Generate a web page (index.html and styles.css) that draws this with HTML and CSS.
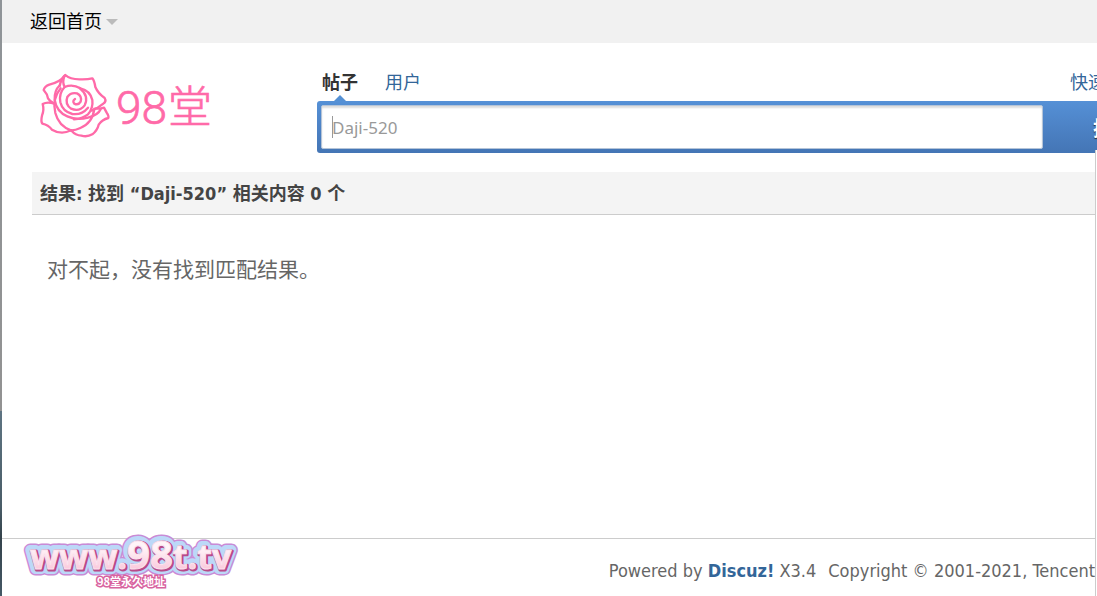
FILE: index.html
```html
<!DOCTYPE html>
<html lang="zh-CN">
<head>
  <meta charset="UTF-8">
  <meta name="viewport" content="width=device-width, initial-scale=1">
  <title>搜索 - 98堂</title>
  <link rel="stylesheet" href="styles.css">
</head>
<body>

<nav class="toptb">
  <a href="#" class="home">返回首页</a>
</nav>

<header class="header">
  <a href="#" class="logo">
    <svg width="190" height="76" viewBox="0 0 570 228" role="img" aria-label="98堂">
      <g fill="none" stroke="#ff6aa8" stroke-width="7" stroke-linecap="round" stroke-linejoin="round">
        <path d="M89 54 Q93 32 106 21 Q120 34 148 34 Q172 35 187 31 Q193 38 196 57 Q204 76 224 90 Q230 100 220 107 Q202 122 185 128"/>
        <path d="M104 24 Q90 42 58 50 Q44 55 41 66 Q52 78 54 91 Q60 101 73 107"/>
        <path d="M73 107 Q52 100 38 108 Q43 125 36 143 Q32 159 37 167 Q55 171 66 185 Q94 202 123 187"/>
        <path d="M123 187 Q137 203 154 203 Q172 208 187 199 Q202 187 206 170 Q216 155 235 150 Q237 144 230 134 L222 119 Q208 123 198 121"/>
        <path d="M92 61 Q66 92 76 135 Q86 174 123 187"/>
        <path d="M90 51 Q72 68 74 96 Q80 132 112 145 Q140 158 174 149 Q204 142 212 124"/>
        <path d="M103 25 Q96 42 104 57 Q128 47 151 61 Q181 68 187 96 Q190 120 174 139 Q157 152 132 154"/>
        <path d="M104 57 Q86 76 91 103 Q98 131 127 138 Q155 142 174 119"/>
        <path d="M149 60 Q178 84 164 112 Q148 133 123 122 Q104 108 112 87 Q122 72 141 76 Q157 84 152 101 Q145 113 133 107 Q126 99 135 93"/>
        <path d="M193 122 Q188 165 151 180 Q137 187 123 187"/>
      </g>
      <text x="258" y="167" class="logo-num">98</text>
      <text x="414" y="164" class="logo-cn">堂</text>
    </svg>
  </a>

  <form class="search">
    <div class="tabs">
      <a href="#" class="active">帖子</a>
      <a href="#">用户</a>
      <a href="#" class="quick">快速</a>
    </div>
    <div class="bar">
      <input type="text" placeholder="Daji-520" aria-label="搜索">
      <button type="submit">搜索</button>
    </div>
  </form>
</header>

<main class="results">
  <h2>结果: 找到 <span>“Daji-520”</span> 相关内容 0 个</h2>
  <p>对不起，没有找到匹配结果。</p>
</main>

<footer class="footer">
  <a href="#" class="site">
    <svg width="220" height="60" viewBox="0 0 220 60" role="img" aria-label="www.98t.tv 98堂永久地址">
      <defs>
        <linearGradient id="pink" x1="0" y1="0" x2="0" y2="1">
          <stop offset="0.4" stop-color="#fff4f8"/>
          <stop offset="0.9" stop-color="#f9bdd4"/>
        </linearGradient>
      </defs>
      <use href="#site-name" stroke="#c98bd6" stroke-width="13"/>
      <use href="#site-name" stroke="#bcd8f8" stroke-width="10"/>
      <use href="#site-name" x="1" y="1" stroke="#b84a8a" stroke-width="3"/>
      <g fill="url(#pink)" stroke="#fbe3ee" stroke-width="1">
        <text id="site-name" class="site-name" x="8" y="36">www.<tspan class="big">98</tspan>t.tv</text>
      </g>
      <text x="75" y="53" class="site-cn">98堂永久地址</text>
    </svg>
  </a>
  <p class="powered">Powered by <a href="#">Discuz!</a> X3.4</p>
  <p class="copyright">Copyright © 2001-2021, Tencent</p>
</footer>

<div class="edge"></div>

</body>
</html>
```
FILE: styles.css
```css
* {
  box-sizing: border-box;
}

body {
  position: relative;
  display: flex;
  flex-direction: column;
  min-height: 100vh;
  margin: 0;
  padding-left: 2px;
  overflow: hidden;
  background: linear-gradient(#8f9498 0, #929292 69%, #5e7482 69%, #4a5d68 85%, #34434c 90%, #455865 100%) left top / 2px 100% no-repeat #fff;
  color: #666;
  font-family: "DejaVu Sans Condensed", "Noto Sans CJK SC", sans-serif;
  font-size: 18px;
}

a {
  color: #336699;
  text-decoration: none;
}

.toptb {
  height: 43px;
  padding-left: 28px;
  background: #f1f1f1;
  line-height: 43px;
}

.home {
  display: inline-flex;
  align-items: center;
  gap: 4px;
  color: #000;
}

.home::after {
  content: "";
  border: 6px solid transparent;
  border-top-color: #bbb;
  border-bottom: 0;
}

.header {
  display: flex;
  height: 129px;
  padding-left: 28px;
}

.logo {
  flex: 0 0 287px;
  padding-top: 25px;
}

.logo svg {
  display: block;
}

.logo-num,
.logo-cn {
  fill: #ff6aa8;
  stroke: #ff6aa8;
  stroke-width: 2px;
  font-family: Roboto, sans-serif;
  font-size: 138px;
  font-weight: 300;
}

.logo-cn {
  font-family: "Noto Sans CJK SC", sans-serif;
  font-size: 132px;
}

.search {
  flex: 1;
  min-width: 0;
  padding-top: 20px;
}

.tabs {
  display: flex;
  gap: 27px;
  height: 38px;
  padding-left: 5px;
  line-height: 40px;
}

.tabs .active {
  position: relative;
  color: #333;
  font-weight: bold;
}

.tabs .active::after {
  content: "";
  position: absolute;
  bottom: 0;
  left: 12px;
  border: 6px solid transparent;
  border-bottom-color: #5590d3;
  border-top: 0;
}

.tabs .quick {
  width: 27px;
  margin-left: auto;
  overflow: hidden;
  white-space: nowrap;
}

.bar {
  display: flex;
  height: 52px;
  padding: 4px 0 4px 4px;
  border-radius: 3px 0 0 3px;
  background: linear-gradient(#5590d6, #4475b5);
}

.bar input {
  flex: 1;
  min-width: 0;
  padding: 0 10px;
  border: 1px solid #b4c4d8;
  border-radius: 2px;
  /* text cursor */
  background: linear-gradient(#999, #999) 10px 10px / 1px 22px no-repeat #fff;
  box-shadow: inset 0 2px 2px #ddd;
  font-family: "Noto Sans", sans-serif;
  font-size: 17px;
}

.bar input::placeholder {
  color: #999;
}

.bar button {
  flex: 0 0 54px;
  padding: 0 0 0 50px;
  border: 0;
  overflow: hidden;
  background: none;
  color: #fff;
  font: bold 20px "Noto Sans CJK SC", sans-serif;
  text-align: left;
  text-shadow: 0 1px 1px #333;
  white-space: nowrap;
}

.results {
  flex: 1;
  padding-left: 30px;
}

.results h2 {
  height: 43px;
  margin: 0;
  padding-left: 8px;
  border-bottom: 1px solid #ccc;
  background: #f4f4f4;
  color: #444;
  font-size: 18px;
  line-height: 44px;
}

.results p {
  margin: 39px 15px;
  font-size: 21px;
  line-height: 32px;
}

.footer {
  display: flex;
  align-items: center;
  height: 58px;
  padding-right: 2px;
  border-top: 1px solid #ccc;
  white-space: nowrap;
}

.footer p {
  margin: 6px 0 0;
}

.footer .powered {
  margin-left: auto;
  margin-right: 12px;
}

.powered a {
  font-weight: bold;
}

.site {
  margin-left: 20px;
  margin-top: -10px;
}

.site svg {
  display: block;
  overflow: visible;
}

.site-name {
  font: bold 34px "Open Sans", sans-serif;
  stroke-linejoin: round;
}

.site-name .big {
  font-size: 40px;
}

.site-cn {
  fill: #fff;
  stroke: #d8639f;
  stroke-width: 3px;
  paint-order: stroke;
  font: bold 11px "Noto Sans CJK SC", sans-serif;
}

.edge {
  position: absolute;
  top: 150px;
  right: 0;
  bottom: 0;
  width: 2px;
  border-left: 1px solid #ccc;
  background: #fff;
}
```
